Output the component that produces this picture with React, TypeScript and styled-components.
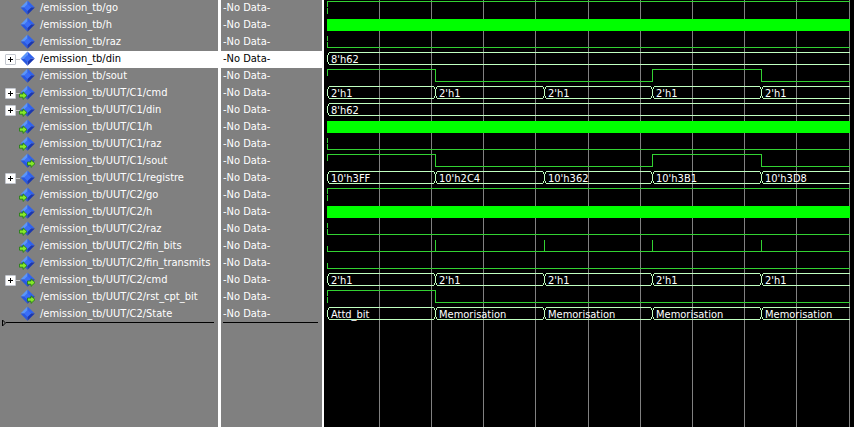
import React from "react";
import styled, { createGlobalStyle, css } from "styled-components";

const ROW = 17;
const SPAN = 523;
const HIGH = 1;
const LOW = 13;
const CHANGES = [108, 217, 325, 434];

type Port = "in" | "out";
type Wave =
  | { kind: "level"; start: 0 | 1; toggles?: number[]; half?: boolean }
  | { kind: "clock" }
  | { kind: "pulse"; at: number[] }
  | { kind: "bus"; values: string[] };

interface Signal {
  name: string;
  port?: Port;
  expandable?: boolean;
  selected?: boolean;
  wave: Wave;
}

const sout: Wave = { kind: "level", start: 1, toggles: [108, 325, 434], half: true };
const cmd: Wave = { kind: "bus", values: ["2'h1", "2'h1", "2'h1", "2'h1", "2'h1"] };

const signals: Signal[] = [
  { name: "/emission_tb/go", wave: { kind: "level", start: 1 } },
  { name: "/emission_tb/h", wave: { kind: "clock" } },
  { name: "/emission_tb/raz", wave: { kind: "level", start: 0 } },
  { name: "/emission_tb/din", expandable: true, selected: true, wave: { kind: "bus", values: ["8'h62"] } },
  { name: "/emission_tb/sout", wave: sout },
  { name: "/emission_tb/UUT/C1/cmd", port: "in", expandable: true, wave: cmd },
  { name: "/emission_tb/UUT/C1/din", port: "in", expandable: true, wave: { kind: "bus", values: ["8'h62"] } },
  { name: "/emission_tb/UUT/C1/h", port: "in", wave: { kind: "clock" } },
  { name: "/emission_tb/UUT/C1/raz", port: "in", wave: { kind: "level", start: 0 } },
  { name: "/emission_tb/UUT/C1/sout", port: "out", wave: sout },
  {
    name: "/emission_tb/UUT/C1/registre",
    expandable: true,
    wave: { kind: "bus", values: ["10'h3FF", "10'h2C4", "10'h362", "10'h3B1", "10'h3D8"] },
  },
  { name: "/emission_tb/UUT/C2/go", port: "in", wave: { kind: "level", start: 1 } },
  { name: "/emission_tb/UUT/C2/h", port: "in", wave: { kind: "clock" } },
  { name: "/emission_tb/UUT/C2/raz", port: "in", wave: { kind: "level", start: 0 } },
  { name: "/emission_tb/UUT/C2/fin_bits", port: "in", wave: { kind: "pulse", at: CHANGES } },
  { name: "/emission_tb/UUT/C2/fin_transmits", port: "in", wave: { kind: "pulse", at: [] } },
  { name: "/emission_tb/UUT/C2/cmd", port: "out", expandable: true, wave: cmd },
  { name: "/emission_tb/UUT/C2/rst_cpt_bit", port: "out", wave: { kind: "level", start: 1, toggles: [108] } },
  {
    name: "/emission_tb/UUT/C2/State",
    wave: { kind: "bus", values: ["Attd_bit", "Memorisation", "Memorisation", "Memorisation", "Memorisation"] },
  },
];

const GlobalStyle = createGlobalStyle`
  * { box-sizing: border-box; }
  body {
    margin: 0;
    background: #808080;
    color: #fff;
    font: 11px/17px "DejaVu Sans Condensed", "DejaVu Sans", sans-serif;
  }
`;

const Viewer = styled.main`
  display: grid;
  grid-template-columns: 218px 106px minmax(0, 1fr);
  min-height: 100vh;
`;

const Pane = styled.section`
  background: #808080;
`;

const ValuePane = styled(Pane)`
  border-left: 3px solid #fff;
  border-right: 2px solid #fff;
`;

const selectedRow = css`
  background: #fff;
  color: #000;
`;

const NameRow = styled.div<{ $selected?: boolean }>`
  display: grid;
  grid-template-columns: 11px 4px 16px auto;
  align-items: center;
  height: ${ROW}px;
  padding-left: 5px;
  white-space: nowrap;
  ${(p) => p.$selected && selectedRow}
`;

const ValueRow = styled.div<{ $selected?: boolean }>`
  height: ${ROW}px;
  padding-left: 2px;
  line-height: 15px;
  ${(p) => p.$selected && selectedRow}
`;

const Expander = styled.button`
  display: flex;
  width: 11px;
  height: 11px;
  padding: 0;
  border: 1px solid #c4c8d0;
  border-radius: 1px;
  background: #fff;
`;

const Branch = styled.span<{ $on?: boolean }>`
  height: 1px;
  background: ${(p) => (p.$on ? "#c8c8c8" : "transparent")};
`;

const Name = styled.span`
  padding-left: 4px;
  line-height: 15px;
  height: ${ROW}px;
`;

const EndLine = styled.div`
  display: flex;
  align-items: center;
  height: 9px;
  margin: -5px 4px 0 2px;
`;

const Rule = styled.span`
  flex: 1;
  height: 1px;
  background: #000;
`;

const WavePane = styled.section`
  position: relative;
  background: #000;
  padding: 0 4px 0 3px;
`;

const GridLines = styled.svg`
  position: absolute;
  inset: 0 4px 0 3px;
  width: calc(100% - 7px);
  height: 100%;
`;

const WaveRow = styled.div`
  position: relative;
  height: ${ROW}px;
`;

const Trace = styled.svg`
  display: block;
  width: 100%;
  height: ${ROW}px;
`;

const BusValues = styled.div<{ $split: boolean }>`
  position: absolute;
  inset: 0;
  display: grid;
  grid-template-columns: ${(p) => (p.$split ? "108fr 109fr 108fr 109fr 89fr" : "1fr")};
`;

const BusValue = styled.span`
  padding-left: 4px;
  line-height: ${ROW}px;
  white-space: nowrap;
`;

function SignalIcon({ port }: { port?: Port }) {
  return (
    <svg width="16" height="17" viewBox="0 0 16 17" overflow="visible" aria-hidden="true">
      <path d="M7.5 0.5 L7.5 7.5 L0.5 7.5Z" fill="#5a96fa" />
      <path d="M7.5 0.5 L14.8 7.5 L7.5 7.5Z" fill="#2f62ee" />
      <path d="M0.5 7.5 L7.5 14.8 L7.5 7.5Z" fill="#2858e0" />
      <path d="M14.8 7.5 L7.5 14.8 L7.5 7.5Z" fill="#1a36b0" />
      <path d="M7.5 4 L11.2 7.5 L7.5 11 L4 7.5Z" fill="#3a6ef6" />
      {port && (
        <path
          transform={port === "in" ? "translate(-1 6)" : "translate(7 6)"}
          d="M0.5 3 H4 V0.8 L8 4.6 L4 8.4 V6.2 H0.5Z"
          fill="#86e82a"
          stroke="#1d7a10"
          strokeWidth="0.8"
        />
      )}
    </svg>
  );
}

function busPath(edges: number[]) {
  const stops = [0, ...edges];
  return stops
    .map((x, i) => {
      const last = i === stops.length - 1;
      const next = last ? SPAN : stops[i + 1];
      const end = last ? next : next - 1;
      const opening = `M${x + 0.5} 4 V11 M${x + 1.5} 2 V4 M${x + 1.5} 11 V13`;
      const rails = `M${x + 2} 1.5 H${end} M${x + 2} 13.5 H${end}`;
      const closing = last ? "" : `M${next - 0.5} 2 V4 M${next - 0.5} 11 V13`;
      return `${opening} ${rails} ${closing}`;
    })
    .join(" ");
}

function levelPath(start: 0 | 1, toggles: number[]) {
  let high = start === 1;
  let d = `M0 ${(high ? HIGH : LOW) + 0.5}`;
  toggles.forEach((x) => {
    high = !high;
    d += ` H${x + 0.5} V${(high ? HIGH : LOW) + 0.5}`;
  });
  return `${d} H${SPAN}`;
}

function WaveTrace({ wave }: { wave: Wave }) {
  const line = { fill: "none", shapeRendering: "crispEdges" as const };
  const green = { ...line, stroke: "#32d232" };
  return (
    <Trace viewBox={`0 0 ${SPAN} ${ROW}`} preserveAspectRatio="none" aria-hidden="true">
      {wave.kind === "clock" && <rect x="0" y="2" width={SPAN} height="12" fill="#00ff00" />}
      {wave.kind === "level" && (
        <>
          <path {...green} d={levelPath(wave.start, wave.toggles ?? [])} />
          <path {...green} d={wave.half ? "M0.5 1 V8" : "M0.5 2 V7 M0.5 8 V14"} />
        </>
      )}
      {wave.kind === "pulse" && (
        <path {...green} d={`M0 13.5 H${SPAN} M0.5 8 V13 ${wave.at.map((x) => `M${x + 0.5} 2 V13`).join(" ")}`} />
      )}
      {wave.kind === "bus" && (
        <path {...line} stroke="#c0ffc0" d={busPath(wave.values.length > 1 ? CHANGES : [])} />
      )}
    </Trace>
  );
}

export default function App() {
  return (
    <>
      <GlobalStyle />
      <Viewer>
        <Pane aria-label="Signals">
          {signals.map((s) => (
            <NameRow key={s.name} $selected={s.selected}>
              {s.expandable ? (
                <Expander type="button" aria-label={`Expand ${s.name}`}>
                  <svg width="9" height="9" viewBox="0 0 9 9" aria-hidden="true">
                    <path d="M2 4.5H7M4.5 2V7" stroke="#000" shapeRendering="crispEdges" />
                  </svg>
                </Expander>
              ) : (
                <span />
              )}
              <Branch $on={s.expandable} />
              <SignalIcon port={s.port} />
              <Name>{s.name}</Name>
            </NameRow>
          ))}
          <EndLine>
            <svg width="4" height="8" viewBox="0 0 4 8" aria-hidden="true">
              <path d="M0.5 1L3.5 4L0.5 7Z" fill="none" stroke="#000" />
            </svg>
            <Rule />
          </EndLine>
        </Pane>
        <ValuePane aria-label="Values">
          {signals.map((s) => (
            <ValueRow key={s.name} $selected={s.selected}>
              -No Data-
            </ValueRow>
          ))}
          <EndLine>
            <Rule />
          </EndLine>
        </ValuePane>
        <WavePane aria-label="Waveforms">
          <GridLines viewBox={`0 0 ${SPAN} 100`} preserveAspectRatio="none" aria-hidden="true">
            {[52, 104, 156, 208, 261, 313, 365, 417, 469, 522].map((x) => (
              <path key={x} d={`M${x + 0.5} 0V100`} stroke="#808080" vectorEffect="non-scaling-stroke" />
            ))}
          </GridLines>
          {signals.map((s) => (
            <WaveRow key={s.name}>
              <WaveTrace wave={s.wave} />
              {s.wave.kind === "bus" && (
                <BusValues $split={s.wave.values.length > 1}>
                  {s.wave.values.map((v, i) => (
                    <BusValue key={i}>{v}</BusValue>
                  ))}
                </BusValues>
              )}
            </WaveRow>
          ))}
        </WavePane>
      </Viewer>
    </>
  );
}
